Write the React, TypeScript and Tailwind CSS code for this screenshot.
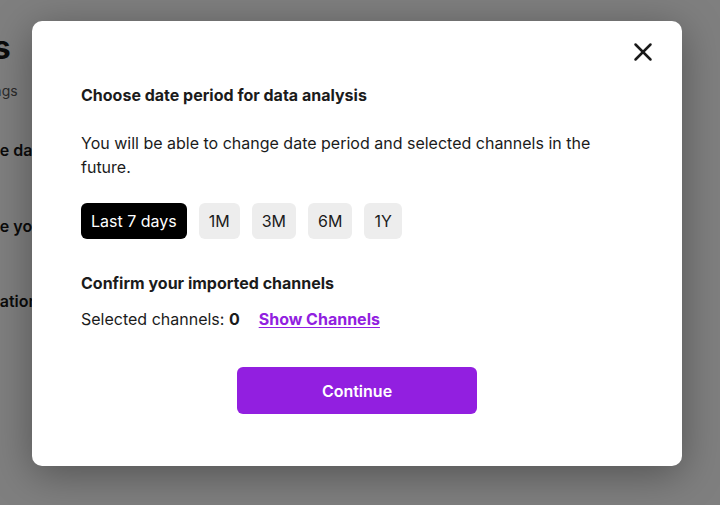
import { X } from 'lucide-react';

const PERIODS = ['Last 7 days', '1M', '3M', '6M', '1Y'];

const App = () => {
  const active = 'Last 7 days';

  return (
    <div className="relative w-[720px] h-[505px] overflow-hidden bg-white font-['Inter',sans-serif]">
      {/* Page behind the overlay */}
      <div className="pt-[26px] text-[#161616] whitespace-nowrap">
        <h1 className="-ml-[178px] text-[32px] font-bold leading-[44px]">Integrations</h1>
        <p className="-ml-[36px] text-[14px] text-[#555] leading-5 mt-[11px]">Settings</p>
        <p className="-ml-[50px] text-[16px] font-semibold mt-[37px]">Choose date period</p>
        <p className="-ml-[50px] text-[16px] font-semibold mt-[52px]">Choose your channels</p>
        <p className="-ml-[63px] text-[16px] font-semibold mt-[51px]">Confirmation</p>
      </div>

      {/* Overlay */}
      <div className="absolute inset-0 bg-black/50">
        <div className="relative ml-[32px] mt-[21px] w-[650px] h-[445px] bg-white rounded-[10px] shadow-[0_8px_40px_rgba(0,0,0,0.35)] px-[49px] pt-[62px]">
          <button className="absolute right-[24px] top-[16px] text-[#1a1a1a]">
            <X className="w-[30px] h-[30px]" strokeWidth={2} />
          </button>

          <h2 className="text-[16px] font-bold leading-6 text-[#1b1b1b]">
            Choose date period for data analysis
          </h2>
          <p className="mt-6 text-[16px] leading-6 text-[#1b1b1b]">
            You will be able to change date period and selected channels in the future.
          </p>

          <div className="mt-6 flex gap-3">
            {PERIODS.map((p) => (
              <button
                key={p}
                className={
                  p === active
                    ? 'h-9 px-[10px] rounded-md bg-black text-white text-[16px]'
                    : 'h-9 px-[10px] rounded-md bg-[#ededed] text-[#1b1b1b] text-[16px]'
                }
              >
                {p}
              </button>
            ))}
          </div>

          <h3 className="mt-8 text-[16px] font-bold leading-6 text-[#1b1b1b]">
            Confirm your imported channels
          </h3>
          <div className="mt-3 flex items-center text-[16px] leading-6 text-[#1b1b1b]">
            <span>
              Selected channels: <span className="font-bold">0</span>
            </span>
            <a className="ml-[19px] font-bold text-[#9120e0] underline underline-offset-2">Show Channels</a>
          </div>

          <div className="mt-9 flex justify-center">
            <button className="w-[240px] h-[47px] rounded-md bg-[#921fe0] text-white text-[16px] font-semibold">
              Continue
            </button>
          </div>
        </div>
      </div>
    </div>
  );
};

export default App;
